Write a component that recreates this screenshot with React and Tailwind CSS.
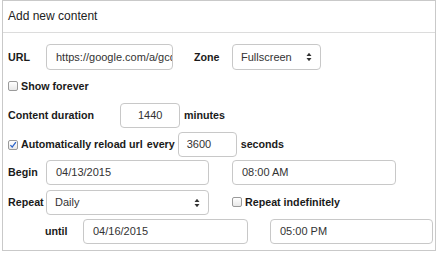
import React from 'react';

const field = 'h-[25px] border border-[#c8c8c8] rounded-[4px] bg-white flex items-center text-[11px] text-[#333] overflow-hidden whitespace-nowrap';

const Box = ({ checked }) => (
  <span className="w-[10px] h-[10px] rounded-[2px] border border-[#9a9a9a] bg-gradient-to-b from-white to-[#e8e8e8] flex items-center justify-center mr-[3px] shrink-0">
    {checked && (
      <svg width="10" height="10" viewBox="0 0 10 10">
        <path d="M1.8 5.2 L4 7.6 L8.6 1.4" fill="none" stroke="#2a62c9" strokeWidth="1.6" />
      </svg>
    )}
  </span>
);

const Arrows = () => (
  <svg width="6" height="10" viewBox="0 0 6 10" className="ml-auto mr-[8px]">
    <path d="M0.5 4 L3 0.8 L5.5 4 Z M0.5 6 L3 9.2 L5.5 6 Z" fill="#333" />
  </svg>
);

export default function App() {
  return (
    <div className="w-[440px] h-[254px] bg-white" style={{ fontFamily: '"Liberation Sans", Arial, sans-serif' }}>
      <div className="ml-[2px] w-[434px] h-[251px] border border-[#c9c9c9] text-[#1a1a1a]">
        <div className="h-[32px] border-b border-[#dcdcdc] pt-[6px] pl-[5px] text-[12px] text-[#222]">
          Add new content
        </div>
        <div className="pl-[5px] text-[10.7px] font-bold">
          <div className="mt-[11px] h-[26px] flex items-center">
            <span className="w-[38px]">URL</span>
            <div className={`${field} h-[26px] w-[127px] pl-[9px] font-normal`}>https://google.com/a/gcd</div>
            <span className="ml-[21px] w-[38px]">Zone</span>
            <div className={`${field} h-[26px] w-[89px] pl-[8px] font-normal`}>Fullscreen<Arrows /></div>
          </div>
          <div className="mt-[8px] h-[16px] flex items-center">
            <Box />
            <span>Show forever</span>
          </div>
          <div className="mt-[9px] h-[25px] flex items-center">
            <span className="w-[112px]">Content duration</span>
            <div className={`${field} w-[60px] pl-[17px] font-normal`}>1440</div>
            <span className="ml-[4px]">minutes</span>
          </div>
          <div className="mt-[4px] h-[25px] flex items-center">
            <Box checked />
            <span>Automatically reload url</span>
            <span className="ml-[4px] mr-[3px]">every</span>
            <div className={`${field} w-[59px] pl-[8px] font-normal`}>3600</div>
            <span className="ml-[4px]">seconds</span>
          </div>
          <div className="mt-[3px] h-[25px] flex items-center">
            <span className="w-[38px]">Begin</span>
            <div className={`${field} w-[163px] pl-[9px] font-normal`}>04/13/2015</div>
            <div className={`${field} ml-[23px] w-[164px] pl-[9px] font-normal`}>08:00 AM</div>
          </div>
          <div className="mt-[5px] h-[25px] flex items-center">
            <span className="w-[38px]">Repeat</span>
            <div className={`${field} w-[163px] pl-[8px] font-normal`}>Daily<Arrows /></div>
            <span className="ml-[23px] flex items-center">
              <Box />
              <span>Repeat indefinitely</span>
            </span>
          </div>
          <div className="mt-[4px] h-[25px] flex items-center">
            <span className="ml-[37px] w-[38px]">until</span>
            <div className={`${field} w-[165px] pl-[9px] font-normal`}>04/16/2015</div>
            <div className={`${field} ml-[22px] w-[163px] pl-[9px] font-normal`}>05:00 PM</div>
          </div>
        </div>
      </div>
    </div>
  );
}
